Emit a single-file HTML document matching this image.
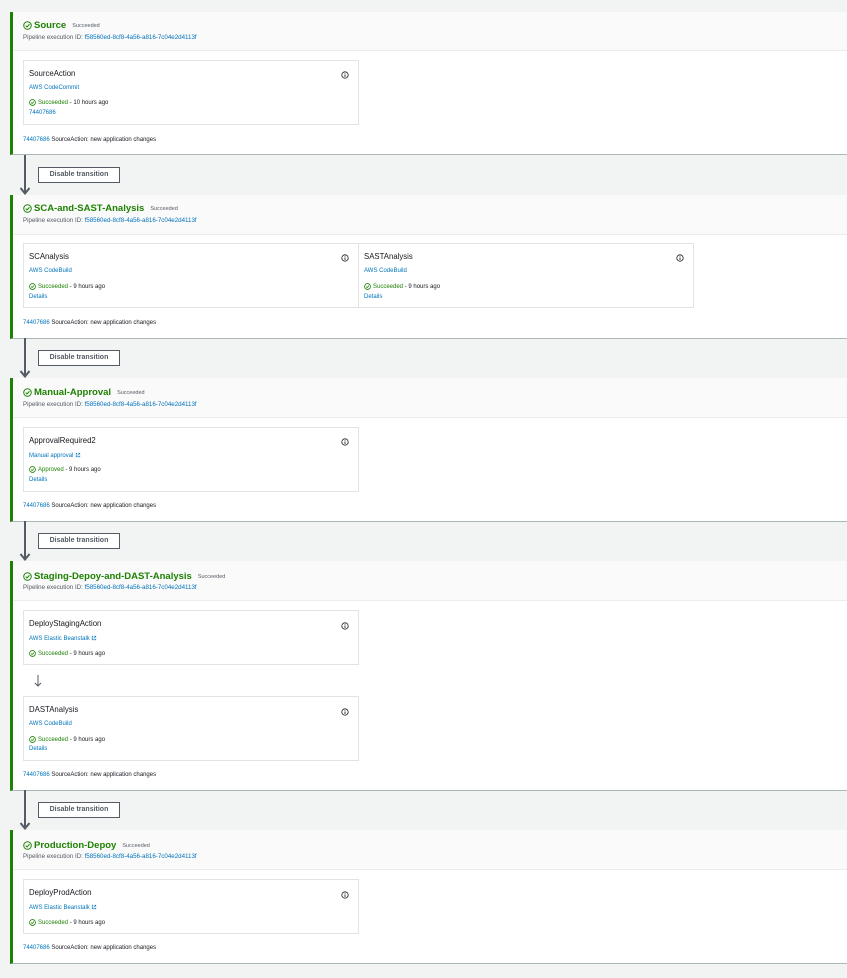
<!DOCTYPE html>
<html><head><meta charset="utf-8"><style>
*{margin:0;padding:0;box-sizing:border-box}
body{width:847px;height:978px;background:#f2f3f3;position:relative;overflow:hidden;font-family:"Liberation Sans",sans-serif;color:#16191f}
.a{position:absolute;white-space:nowrap}
.stage{position:absolute;left:10px;width:837px;background:#fff;border-left:3px solid #1d8102;border-bottom:1px solid #aab7b8}
.hdr{position:absolute;left:0;top:0;right:0;height:39px;background:#fafafa;border-bottom:1px solid #eaeded}
.t{font-size:9.5px;font-weight:bold;color:#1d8102}
.s{font-size:5.5px;color:#545b64;font-weight:normal;margin-left:6px;vertical-align:1px}
.pid{font-size:6.2px;color:#545b64}
.lk{color:#0073bb}
.card{position:absolute;border:1px solid #e1e4e5;background:#fff}
.ct{font-size:7.8px;color:#16191f}
.sm{font-size:6px}
.ok{color:#1d8102}
.btn{position:absolute;left:38px;width:82px;height:16px;border:1px solid #545b64;background:#fff;font-size:7px;font-weight:bold;color:#545b64;text-align:center;line-height:14px;z-index:2}
.arr{position:absolute;left:19px;z-index:3}
</style></head><body>

<svg width="0" height="0" style="position:absolute"><defs>
<symbol id="chk" viewBox="0 0 10 10"><circle cx="5" cy="5" r="4.2" fill="none" stroke="#1d8102" stroke-width="1.1"/><path d="M3 5.1l1.5 1.5 2.7-3" fill="none" stroke="#1d8102" stroke-width="1.1"/></symbol>
<symbol id="inf" viewBox="0 0 10 10"><circle cx="5" cy="5" r="4" fill="none" stroke="#16191f" stroke-width="1"/><path d="M5 4.3v3M5 2.6v.9" stroke="#16191f" stroke-width="1.1"/></symbol>
<symbol id="ext" viewBox="0 0 10 10"><path d="M4 2H2v6h6V6M6 2h2v2M8 2L4.5 5.5" fill="none" stroke="#0073bb" stroke-width="1.1"/></symbol>
<symbol id="dn" viewBox="0 0 12 40"><path d="M6 0V38M1.5 33L6 38.5 10.5 33" fill="none" stroke="#545b64" stroke-width="2"/></symbol>
</defs></svg>

<!-- Stage 1 -->
<div class="stage" style="top:12px;height:143px"><div class="hdr"></div></div>
<svg class="a" style="left:23px;top:21px" width="9" height="9"><use href="#chk"/></svg>
<div class="a t" style="left:34px;top:20px">Source<span class="s">Succeeded</span></div>
<div class="a pid" style="left:23px;top:34px">Pipeline execution ID: <span class="lk">f58560ed-8cf8-4a56-a816-7c04e2d4113f</span></div>
<div class="card" style="left:23px;top:60px;width:336px;height:65px"></div>
<div class="a ct" style="left:29px;top:69px">SourceAction</div>
<svg class="a" style="left:341px;top:71px" width="8" height="8"><use href="#inf"/></svg>
<div class="a sm lk" style="left:29px;top:85px">AWS CodeCommit</div>
<svg class="a" style="left:29px;top:99px" width="7" height="7"><use href="#chk"/></svg>
<div class="a sm" style="left:38px;top:100px"><span class="ok">Succeeded</span> - 10 hours ago</div>
<div class="a sm lk" style="left:29px;top:110px">74407686</div>
<div class="a sm" style="left:23px;top:137px"><span class="lk">74407686</span> SourceAction: new application changes</div>

<svg class="arr" style="top:155px" width="12" height="40"><use href="#dn"/></svg>
<div class="btn" style="top:167px">Disable transition</div>

<!-- Stage 2 -->
<div class="stage" style="top:195px;height:144px"><div class="hdr" style="height:40px"></div></div>
<svg class="a" style="left:23px;top:204px" width="9" height="9"><use href="#chk"/></svg>
<div class="a t" style="left:34px;top:203px">SCA-and-SAST-Analysis<span class="s">Succeeded</span></div>
<div class="a pid" style="left:23px;top:217px">Pipeline execution ID: <span class="lk">f58560ed-8cf8-4a56-a816-7c04e2d4113f</span></div>
<div class="card" style="left:23px;top:243px;width:336px;height:65px"></div>
<div class="card" style="left:358px;top:243px;width:336px;height:65px"></div>
<div class="a ct" style="left:29px;top:252px">SCAnalysis</div>
<svg class="a" style="left:341px;top:254px" width="8" height="8"><use href="#inf"/></svg>
<div class="a sm lk" style="left:29px;top:268px">AWS CodeBuild</div>
<svg class="a" style="left:29px;top:283px" width="7" height="7"><use href="#chk"/></svg>
<div class="a sm" style="left:38px;top:284px"><span class="ok">Succeeded</span> - 9 hours ago</div>
<div class="a sm lk" style="left:29px;top:294px">Details</div>
<div class="a ct" style="left:364px;top:252px">SASTAnalysis</div>
<svg class="a" style="left:676px;top:254px" width="8" height="8"><use href="#inf"/></svg>
<div class="a sm lk" style="left:364px;top:268px">AWS CodeBuild</div>
<svg class="a" style="left:364px;top:283px" width="7" height="7"><use href="#chk"/></svg>
<div class="a sm" style="left:373px;top:284px"><span class="ok">Succeeded</span> - 9 hours ago</div>
<div class="a sm lk" style="left:364px;top:294px">Details</div>
<div class="a sm" style="left:23px;top:320px"><span class="lk">74407686</span> SourceAction: new application changes</div>

<svg class="arr" style="top:338px" width="12" height="40"><use href="#dn"/></svg>
<div class="btn" style="top:350px">Disable transition</div>

<!-- Stage 3 -->
<div class="stage" style="top:378px;height:144px"><div class="hdr" style="height:40px"></div></div>
<svg class="a" style="left:23px;top:388px" width="9" height="9"><use href="#chk"/></svg>
<div class="a t" style="left:34px;top:387px">Manual-Approval<span class="s">Succeeded</span></div>
<div class="a pid" style="left:23px;top:401px">Pipeline execution ID: <span class="lk">f58560ed-8cf8-4a56-a816-7c04e2d4113f</span></div>
<div class="card" style="left:23px;top:427px;width:336px;height:65px"></div>
<div class="a ct" style="left:29px;top:436px">ApprovalRequired2</div>
<svg class="a" style="left:341px;top:438px" width="8" height="8"><use href="#inf"/></svg>
<div class="a sm lk" style="left:29px;top:452px">Manual approval <svg width="6" height="6" style="vertical-align:-1px"><use href="#ext"/></svg></div>
<svg class="a" style="left:29px;top:466px" width="7" height="7"><use href="#chk"/></svg>
<div class="a sm" style="left:38px;top:467px"><span class="ok">Approved</span> - 9 hours ago</div>
<div class="a sm lk" style="left:29px;top:477px">Details</div>
<div class="a sm" style="left:23px;top:503px"><span class="lk">74407686</span> SourceAction: new application changes</div>

<svg class="arr" style="top:521px" width="12" height="40"><use href="#dn"/></svg>
<div class="btn" style="top:533px">Disable transition</div>

<!-- Stage 4 -->
<div class="stage" style="top:561px;height:230px"><div class="hdr" style="height:40px"></div></div>
<svg class="a" style="left:23px;top:572px" width="9" height="9"><use href="#chk"/></svg>
<div class="a t" style="left:34px;top:571px">Staging-Depoy-and-DAST-Analysis<span class="s">Succeeded</span></div>
<div class="a pid" style="left:23px;top:584px">Pipeline execution ID: <span class="lk">f58560ed-8cf8-4a56-a816-7c04e2d4113f</span></div>
<div class="card" style="left:23px;top:610px;width:336px;height:55px"></div>
<div class="a ct" style="left:29px;top:619px">DeployStagingAction</div>
<svg class="a" style="left:341px;top:622px" width="8" height="8"><use href="#inf"/></svg>
<div class="a sm lk" style="left:29px;top:635px">AWS Elastic Beanstalk <svg width="6" height="6" style="vertical-align:-1px"><use href="#ext"/></svg></div>
<svg class="a" style="left:29px;top:650px" width="7" height="7"><use href="#chk"/></svg>
<div class="a sm" style="left:38px;top:651px"><span class="ok">Succeeded</span> - 9 hours ago</div>
<svg class="a" style="left:34px;top:675px" width="8" height="12" viewBox="0 0 8 12"><path d="M4 0V11M1 8L4 11 7 8" fill="none" stroke="#545b64" stroke-width="1"/></svg>
<div class="card" style="left:23px;top:696px;width:336px;height:65px"></div>
<div class="a ct" style="left:29px;top:705px">DASTAnalysis</div>
<svg class="a" style="left:341px;top:708px" width="8" height="8"><use href="#inf"/></svg>
<div class="a sm lk" style="left:29px;top:721px">AWS CodeBuild</div>
<svg class="a" style="left:29px;top:736px" width="7" height="7"><use href="#chk"/></svg>
<div class="a sm" style="left:38px;top:737px"><span class="ok">Succeeded</span> - 9 hours ago</div>
<div class="a sm lk" style="left:29px;top:746px">Details</div>
<div class="a sm" style="left:23px;top:772px"><span class="lk">74407686</span> SourceAction: new application changes</div>

<svg class="arr" style="top:790px" width="12" height="40"><use href="#dn"/></svg>
<div class="btn" style="top:802px">Disable transition</div>

<!-- Stage 5 -->
<div class="stage" style="top:830px;height:134px"><div class="hdr" style="height:40px"></div></div>
<svg class="a" style="left:23px;top:841px" width="9" height="9"><use href="#chk"/></svg>
<div class="a t" style="left:34px;top:840px">Production-Depoy<span class="s">Succeeded</span></div>
<div class="a pid" style="left:23px;top:853px">Pipeline execution ID: <span class="lk">f58560ed-8cf8-4a56-a816-7c04e2d4113f</span></div>
<div class="card" style="left:23px;top:879px;width:336px;height:55px"></div>
<div class="a ct" style="left:29px;top:888px">DeployProdAction</div>
<svg class="a" style="left:341px;top:891px" width="8" height="8"><use href="#inf"/></svg>
<div class="a sm lk" style="left:29px;top:904px">AWS Elastic Beanstalk <svg width="6" height="6" style="vertical-align:-1px"><use href="#ext"/></svg></div>
<svg class="a" style="left:29px;top:919px" width="7" height="7"><use href="#chk"/></svg>
<div class="a sm" style="left:38px;top:920px"><span class="ok">Succeeded</span> - 9 hours ago</div>
<div class="a sm" style="left:23px;top:945px"><span class="lk">74407686</span> SourceAction: new application changes</div>

</body></html>
